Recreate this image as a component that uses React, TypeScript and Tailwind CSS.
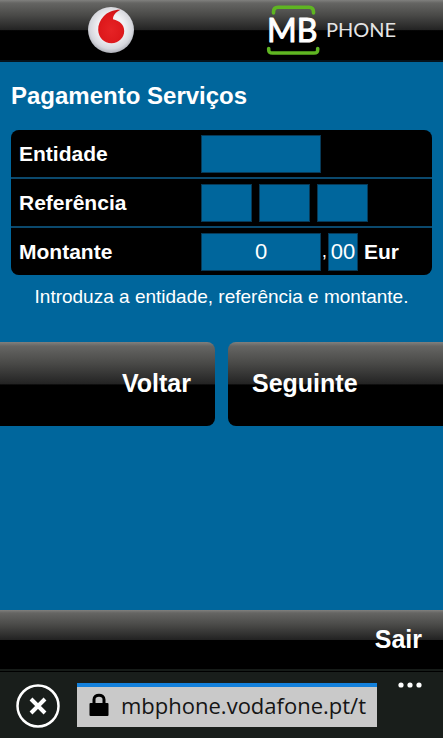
import { useState } from "react";

const glossy =
  "bg-[linear-gradient(to_bottom,#80807e_0%,#656563_5%,#4a4a48_25%,#232323_50%,#000_51%,#000_100%)]";

const field =
  "h-[38px] min-w-0 rounded-none border border-[#073a58] bg-[#00669c] text-center text-[22px] text-white outline-none focus:border-white";

const row = "flex min-h-[47px] items-center px-2 bg-black";
const label = "w-[182px] shrink-0 text-[21px] leading-6 font-bold";

function VodafoneLogo() {
  return (
    <svg width="48" height="48" viewBox="0 0 48 48" aria-hidden="true">
      <defs>
        <radialGradient id="disc" cx="0.5" cy="0.45" r="0.56">
          <stop offset="0.5" stopColor="#f1f1f4" />
          <stop offset="0.82" stopColor="#d6d7dd" />
          <stop offset="1" stopColor="#a9abb3" />
        </radialGradient>
        <radialGradient id="drop" cx="0.5" cy="0.6" r="0.7">
          <stop offset="0" stopColor="#e62325" />
          <stop offset="0.65" stopColor="#dd181b" />
          <stop offset="1" stopColor="#c01014" />
        </radialGradient>
      </defs>
      <circle cx="24" cy="24" r="23" fill="url(#disc)" />
      <path
        d="M33.500 3.800 C27 3.600 20.500 6 16.500 10.500 C13 14.500 11 19 11.200 24 C11.500 31.500 17 37.300 24.500 37.300 C31.800 37.300 37.200 31.500 37.200 25 C37.200 18.800 33 14.800 26 13.200 C26 9.500 28.500 6.200 33.500 3.800 Z"
        fill="url(#drop)"
      />
    </svg>
  );
}

function MbPhoneLogo() {
  return (
    <svg width="136" height="56" viewBox="0 0 136 56" role="img" aria-label="MB Phone">
      <g fill="none" stroke="#5fb522" strokeWidth="3.6" strokeLinecap="round" strokeLinejoin="round">
        <path d="M9.500 11 V10 C9.500 6.500 11 5.300 14 5.300 H45 C48 5.300 49.500 6.500 49.500 10 V11" />
        <path d="M4.700 46.500 V47.500 C4.700 50.500 6 51 8.500 51 H50 C52.500 51 53.700 50.500 53.700 47.500 V46.500" />
      </g>
      <text
        x="3"
        y="40"
        fill="#fff"
        stroke="#fff"
        strokeLinejoin="round"
        className="font-['Lato',sans-serif] text-[32px] stroke-1"
      >
        MB
      </text>
      <text x="62" y="35" fill="#e4e4e4" className="font-['Lato',sans-serif] text-[20px]">
        PHONE
      </text>
    </svg>
  );
}

function Header() {
  return (
    <header className={`flex h-[62px] items-center border-b-2 border-[#06131c] ${glossy}`}>
      <a href="#vodafone" aria-label="Vodafone" className="flex flex-1 justify-center">
        <VodafoneLogo />
      </a>
      <a href="#mbphone" className="flex flex-1 justify-center">
        <MbPhoneLogo />
      </a>
    </header>
  );
}

function PaymentForm() {
  const [entity, setEntity] = useState("");
  const [reference, setReference] = useState(["", "", ""]);
  const [euros, setEuros] = useState("0");
  const [cents, setCents] = useState("00");

  function updateReference(index: number, value: string) {
    setReference(reference.map((part, i) => (i === index ? value : part)));
  }

  return (
    <form onSubmit={(e) => e.preventDefault()}>
      <div className="px-[11px]">
        <h1 className="pt-5 text-[24px] leading-7 font-bold">Pagamento Serviços</h1>
        <div className="mt-5 flex flex-col gap-0.5 overflow-hidden rounded-lg bg-[#0b496d]">
          <div className={row}>
            <label htmlFor="entity" className={label}>
              Entidade
            </label>
            <input
              id="entity"
              inputMode="numeric"
              maxLength={5}
              value={entity}
              onChange={(e) => setEntity(e.target.value)}
              className={`${field} w-[120px]`}
            />
          </div>
          <div className={row}>
            <label htmlFor="reference-0" className={label}>
              Referência
            </label>
            <div className="flex gap-[7px]">
              {reference.map((part, i) => (
                <input
                  key={i}
                  id={`reference-${i}`}
                  aria-label={`Referência ${i + 1}`}
                  inputMode="numeric"
                  maxLength={3}
                  value={part}
                  onChange={(e) => updateReference(i, e.target.value)}
                  className={`${field} w-[51px]`}
                />
              ))}
            </div>
          </div>
          <div className={row}>
            <label htmlFor="euros" className={label}>
              Montante
            </label>
            <input
              id="euros"
              inputMode="numeric"
              value={euros}
              onChange={(e) => setEuros(e.target.value)}
              className={`${field} w-[120px]`}
            />
            <span className="w-[7px] text-center text-[19px]">,</span>
            <input
              aria-label="Cêntimos"
              inputMode="numeric"
              maxLength={2}
              value={cents}
              onChange={(e) => setCents(e.target.value)}
              className={`${field} w-[30px]`}
            />
            <span className="ml-1.5 text-[21px] font-bold">Eur</span>
          </div>
        </div>
        <p className="mt-2.5 text-center text-[19px] leading-6">
          Introduza a entidade, referência e montante.
        </p>
      </div>
      <div className="mt-[33px] flex gap-[13px] text-[25px] font-bold">
        <button type="button" className={`h-[84px] flex-1 rounded-r-lg pr-6 text-right ${glossy}`}>
          Voltar
        </button>
        <button type="submit" className={`h-[84px] flex-1 rounded-l-lg pl-6 text-left ${glossy}`}>
          Seguinte
        </button>
      </div>
    </form>
  );
}

function BrowserBar() {
  const [url, setUrl] = useState("mbphone.vodafone.pt/t");

  return (
    <div className="flex h-[67px] items-start border-t border-black bg-[#191e1b] pl-4">
      <button type="button" aria-label="Parar" className="mt-3 shrink-0">
        <svg width="44" height="44" viewBox="0 0 44 44" fill="none" stroke="#fff">
          <circle cx="22" cy="22" r="20.500" strokeWidth="2.500" />
          <path d="M15 15 L29 29 M29 15 L15 29" strokeWidth="4" />
        </svg>
      </button>
      <div className="mt-[11px] ml-[17px] flex h-11 min-w-0 flex-1 items-center border-t-4 border-[#1481dc] bg-[#c9c9c9] pb-1 pl-3">
        <svg width="20" height="24" viewBox="0 0 20 24" className="shrink-0" aria-hidden="true">
          <path d="M5 11 V6.500 C5 0.800 15 0.800 15 6.500 V11" fill="none" stroke="#000" strokeWidth="3" />
          <rect x="0.500" y="10" width="19" height="13" rx="1" fill="#000" />
        </svg>
        <input
          aria-label="Endereço"
          value={url}
          onChange={(e) => setUrl(e.target.value)}
          className="ml-3 w-full min-w-0 bg-transparent font-['Open_Sans',sans-serif] text-[22px] leading-8 text-[#151515] outline-none"
        />
      </div>
      <button type="button" aria-label="Mais opções" className="mt-2.5 flex w-[66px] shrink-0 justify-center">
        <svg width="24" height="6" viewBox="0 0 24 6" fill="#fff">
          <circle cx="3" cy="3" r="2.600" />
          <circle cx="12" cy="3" r="2.600" />
          <circle cx="21" cy="3" r="2.600" />
        </svg>
      </button>
    </div>
  );
}

export default function App() {
  return (
    <div className="flex min-h-screen flex-col bg-[#00669c] font-['Liberation_Sans',Arial,sans-serif] text-white">
      <Header />
      <main className="flex-1">
        <PaymentForm />
      </main>
      <footer>
        <div className={`flex h-[61px] items-center justify-end border-b-2 border-[#161b18] pr-[21px] ${glossy}`}>
          <a href="#sair" className="text-[25px] font-bold">
            Sair
          </a>
        </div>
        <BrowserBar />
      </footer>
    </div>
  );
}
